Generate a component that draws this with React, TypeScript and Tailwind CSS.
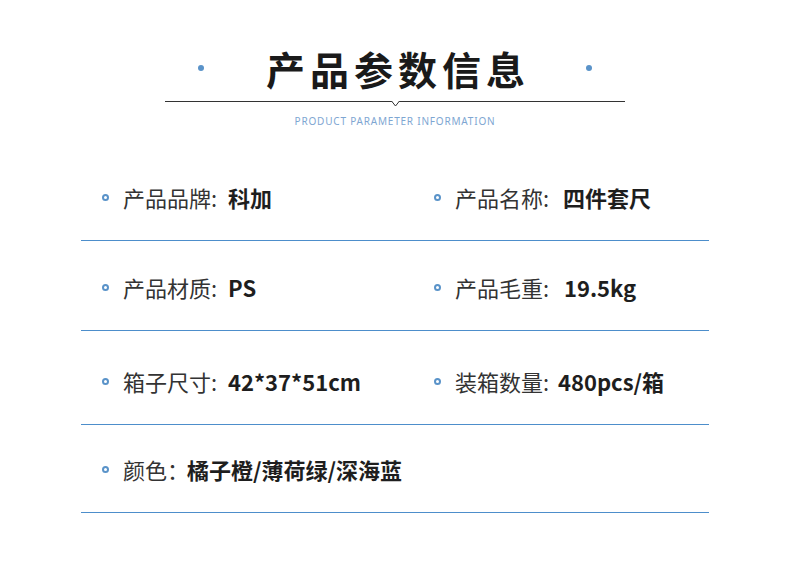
const font = { fontFamily: '"Noto Sans CJK SC", "Noto Sans", sans-serif' };

function Bullet() {
  return <span className="inline-block w-[7px] h-[7px] rounded-full border-2 border-[#5a93c9] shrink-0" />;
}

function Item({ label, value, w = 'w-[105px]' }: { label: string; value: string; w?: string }) {
  return (
    <div className="flex items-center pl-[21px]">
      <Bullet />
      <span className={`${w} ml-[14px] text-[22px] leading-[28px] text-[#333333] whitespace-nowrap`}>{label}</span>
      <span className="text-[22px] leading-[28px] font-bold text-[#1e1e1e] whitespace-nowrap">{value}</span>
    </div>
  );
}

export default function App() {
  return (
    <div className="w-[790px] h-[573px] bg-white overflow-hidden pt-[44px]" style={font}>
      <div className="flex items-center justify-center h-[48px]">
        <span className="w-[6px] h-[6px] rounded-full bg-[#5a93c9]" />
        <h1 className="ml-[62px] mr-[56px] text-[39px] leading-[48px] font-bold tracking-[5px] text-[#1a1a1a]">
          产品参数信息
        </h1>
        <span className="w-[6px] h-[6px] rounded-full bg-[#5a93c9]" />
      </div>

      <div className="relative mx-auto mt-[9px] w-[460px] h-px bg-[#333333]">
        <svg className="absolute left-[226px] top-0" width="9" height="6" viewBox="0 0 9 6">
          <polyline points="0.5,0 4.5,5 8.5,0" fill="white" stroke="#333333" strokeWidth="1" />
        </svg>
      </div>

      <p className="mt-[12px] text-center text-[10px] leading-[14px] tracking-[0.8px] text-[#7ea6d2]" style={{ fontFamily: '"Noto Sans", sans-serif' }}>
        PRODUCT PARAMETER INFORMATION
      </p>

      <div className="mx-[81px]">
        <div className="grid grid-cols-[332px_1fr] items-end h-[113px] pb-[29px] border-b border-[#4d8ecb]">
          <Item label="产品品牌:" value="科加" />
          <Item label="产品名称:" value="四件套尺" w="w-[108px]" />
        </div>
        <div className="grid grid-cols-[332px_1fr] items-end h-[90px] pb-[29px] border-b border-[#4d8ecb]">
          <Item label="产品材质:" value="PS" />
          <Item label="产品毛重:" value="19.5kg" w="w-[109px]" />
        </div>
        <div className="grid grid-cols-[332px_1fr] items-end h-[94px] pb-[29px] border-b border-[#4d8ecb]">
          <Item label="箱子尺寸:" value="42*37*51cm" />
          <Item label="装箱数量:" value="480pcs/箱" w="w-[103px]" />
        </div>
        <div className="grid grid-cols-[332px_1fr] items-end h-[88px] pb-[29px] border-b border-[#4d8ecb]">
          <Item label="颜色：" value="橘子橙/薄荷绿/深海蓝" w="w-[64px]" />
        </div>
      </div>
    </div>
  );
}
